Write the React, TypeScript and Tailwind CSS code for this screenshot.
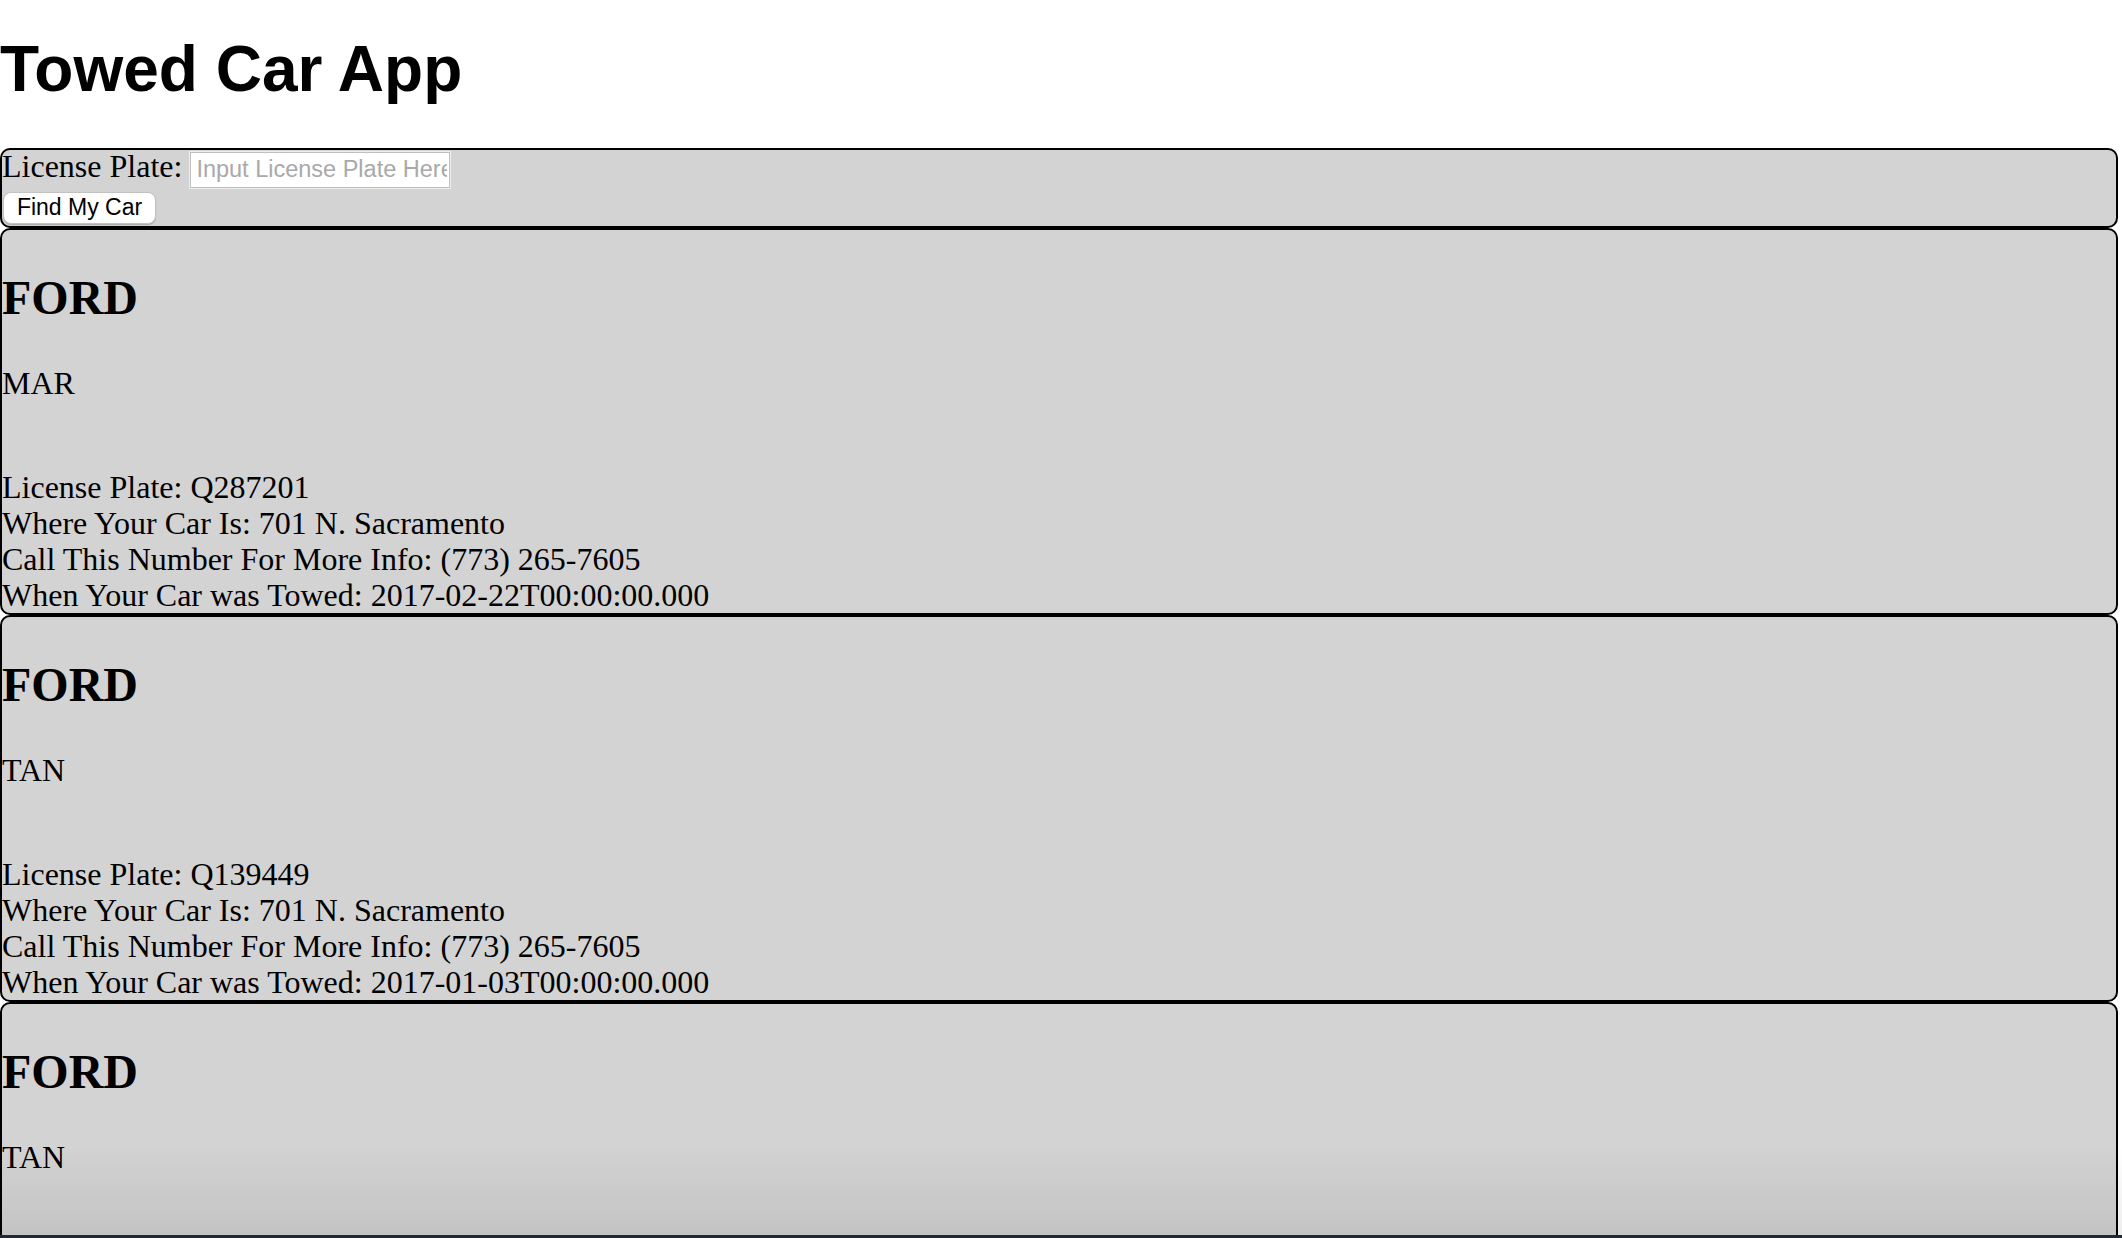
import React from 'react';

interface TowedCar {
    make: string;
    color: string;
    plate: string;
    address: string;
    phone: string;
    towedAt: string;
}

const cars: TowedCar[] = [
    { make: 'FORD', color: 'MAR', plate: 'Q287201', address: '701 N. Sacramento', phone: '(773) 265-7605', towedAt: '2017-02-22T00:00:00.000' },
    { make: 'FORD', color: 'TAN', plate: 'Q139449', address: '701 N. Sacramento', phone: '(773) 265-7605', towedAt: '2017-01-03T00:00:00.000' },
    { make: 'FORD', color: 'TAN', plate: 'Q120587', address: '701 N. Sacramento', phone: '(773) 265-7605', towedAt: '2016-12-19T00:00:00.000' },
];

const SearchForm: React.FC = () => (
    <form className="border-2 border-black rounded-[10px] bg-[#d3d3d3] pb-[2px]" onSubmit={(e) => e.preventDefault()}>
        <div className="flex items-baseline">
            <label className="text-[32px] leading-[33px]">License Plate:</label>
            <input
                type="text"
                placeholder="Input License Plate Here"
                className="ml-[8px] w-[260px] h-[36px] bg-white border border-[#bfbfbf] shadow-[0_0_0_1px_#eeeeee] pl-[5px] pr-[2px] text-[23.5px] font-['Liberation_Sans',Arial,sans-serif] placeholder:text-[#a9a9a9] outline-none"
            />
        </div>
        <button
            type="submit"
            className="mt-[4px] ml-[1px] w-[153px] h-[32px] bg-white border border-[#c2c2c2] rounded-[8px] shadow-[0_1px_1px_rgba(0,0,0,0.2)] text-[23px] leading-none font-['Liberation_Sans',Arial,sans-serif] text-black"
        >
            Find My Car
        </button>
    </form>
);

const CarCard: React.FC<{ car: TowedCar }> = ({ car }) => (
    <div className="border-2 border-black rounded-[10px] bg-[#d3d3d3] text-[32px] leading-[36px]">
        <h2 className="mt-[40px] mb-[40px] text-[48px] leading-[55px] font-bold">{car.make}</h2>
        <p>{car.color}</p>
        <div className="h-[68px]" />
        <div>License Plate: {car.plate}</div>
        <div>Where Your Car Is: {car.address}</div>
        <div>Call This Number For More Info: {car.phone}</div>
        <div>When Your Car was Towed: {car.towedAt}</div>
    </div>
);

export default function App() {
    return (
        <div className="min-h-screen bg-white text-black font-['Liberation_Serif','Times_New_Roman',serif] overflow-hidden">
            <h1 className="mt-[32px] mb-[42px] text-[64px] leading-[74px] font-bold font-['Liberation_Sans',Arial,sans-serif]">
                Towed Car App
            </h1>
            <div className="mr-[4px]">
                <SearchForm />
                {cars.map((car, i) => (
                    <CarCard key={i} car={car} />
                ))}
            </div>
            {/* bottom shading and window edge seen in the screenshot */}
            <div className="pointer-events-none fixed left-0 right-0 bottom-[3px] h-[90px] bg-gradient-to-b from-transparent to-black/[0.07]" />
            <div className="fixed left-0 right-0 bottom-0 h-[3px] bg-[#1e293b]" />
        </div>
    );
}
